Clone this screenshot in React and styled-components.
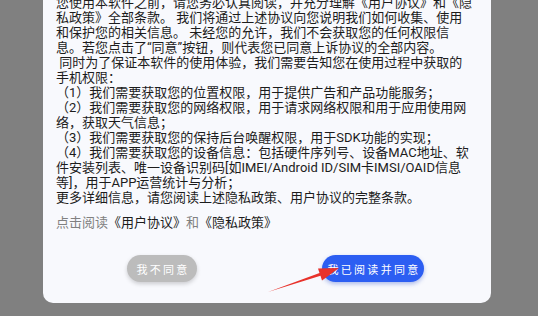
import React from 'react'
import styled, { createGlobalStyle } from 'styled-components'

const GlobalStyle = createGlobalStyle`
  html, body {
    margin: 0;
    padding: 0;
    background: #808080;
  }
  body {
    font-family: Roboto, "Noto Sans CJK SC", sans-serif;
  }
`

const Page = styled.div`
  position: relative;
  width: 538px;
  height: 316px;
  overflow: hidden;
  background: #808080;
  padding-left: 43px;
  box-sizing: border-box;
`

const Dialog = styled.div`
  width: 448px;
  margin-top: -5px;
  padding: 0 13px 21px;
  box-sizing: border-box;
  background: #f8f9fd;
  border-radius: 0 0 10px 10px;
`

const Body = styled.div`
  font-size: 13px;
  line-height: 15px;
  color: #1c1c1c;
  white-space: pre;
`

const Line = styled.div``

const Links = styled.div`
  margin-top: 10px;
  font-size: 13px;
  line-height: 15px;
  color: #808080;
`

const Doc = styled.span`
  color: #1c1c1c;
`

const Actions = styled.div`
  display: flex;
  gap: 125px;
  margin-top: 25px;
  padding-left: 71px;
`

const Pill = styled.button`
  width: ${p => p.$width}px;
  height: 27px;
  border: none;
  border-radius: 14px;
  padding: 0;
  font-family: Roboto, "Noto Sans CJK SC", sans-serif;
  font-size: 11px;
  letter-spacing: 2.3px;
  text-indent: 2px;
  color: #fff;
  background: ${p => (p.$primary ? '#2c5ef2' : '#bcbcbc')};
  box-shadow: ${p => (p.$primary ? '0 2px 4px rgba(30, 70, 200, 0.35)' : '0 2px 4px rgba(0, 0, 0, 0.18)')};
  cursor: pointer;
`

const Arrow = styled.svg`
  position: absolute;
  left: 0;
  top: 0;
  pointer-events: none;
`

const lines = [
  '您使用本软件之前，请您务必认真阅读，并充分理解《用户协议》和《隐',
  '私政策》全部条款。 我们将通过上述协议向您说明我们如何收集、使用',
  '和保护您的相关信息。 未经您的允许，我们不会获取您的任何权限信',
  '息。若您点击了“同意”按钮，则代表您已同意上诉协议的全部内容。',
  ' 同时为了保证本软件的使用体验，我们需要告知您在使用过程中获取的',
  '手机权限：',
  '（1）我们需要获取您的位置权限，用于提供广告和产品功能服务；',
  '（2）我们需要获取您的网络权限，用于请求网络权限和用于应用使用网',
  '络，获取天气信息；',
  '（3）我们需要获取您的保持后台唤醒权限，用于SDK功能的实现；',
  '（4）我们需要获取您的设备信息：包括硬件序列号、设备MAC地址、软',
  '件安装列表、唯一设备识别码[如IMEI/Android ID/SIM卡IMSI/OAID信息',
  '等]，用于APP运营统计与分析；',
  '更多详细信息，请您阅读上述隐私政策、用户协议的完整条款。'
]

export default function App () {
  return (
    <>
      <GlobalStyle />
      <Page>
        <Dialog>
          <Body>
            {lines.map((text, i) => <Line key={i}>{text}</Line>)}
          </Body>
          <Links>
            点击阅读<Doc>《用户协议》</Doc>和<Doc>《隐私政策》</Doc>
          </Links>
          <Actions>
            <Pill $width={70}>我不同意</Pill>
            <Pill $width={102} $primary>我已阅读并同意</Pill>
          </Actions>
        </Dialog>
        <Arrow width='538' height='316' viewBox='0 0 538 316'>
          <polygon
            points='268,292 319.5,273 318,268.5 339,268 322,280.5 320.5,275.8'
            fill='#e8322b' />
        </Arrow>
      </Page>
    </>
  )
}
